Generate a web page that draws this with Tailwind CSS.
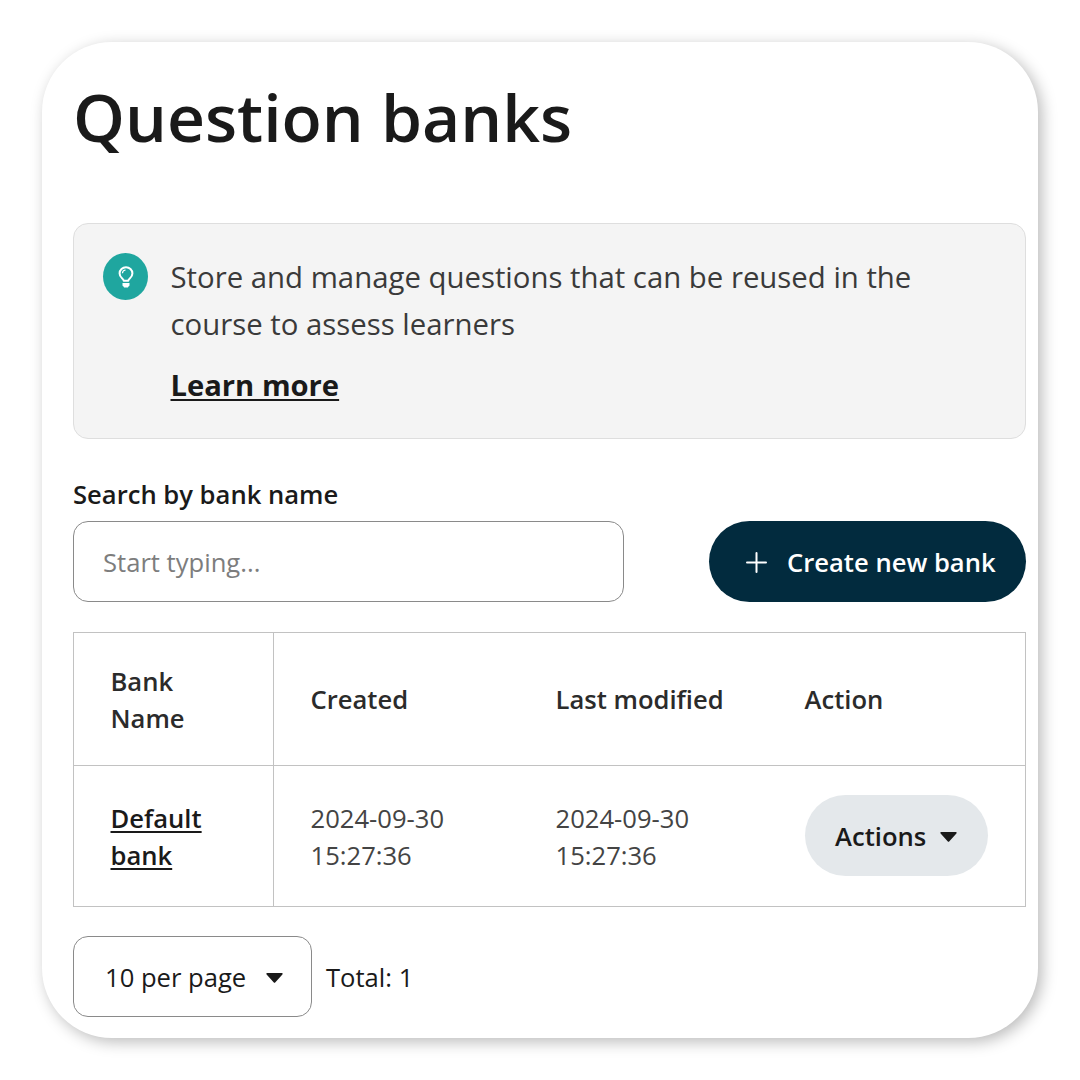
<!DOCTYPE html>
<html lang="en">
<head>
<meta charset="utf-8">
<title>Question banks</title>
<script src="https://cdn.jsdelivr.net/npm/@tailwindcss/browser@4"></script>
</head>
<body class="bg-white font-['Open_Sans',sans-serif] text-[25.6px] leading-[37px] text-[#1a1a1a]">
<div class="h-[1080px] w-[1080px] overflow-hidden p-[42px]">
  <main class="h-[996px] w-[996px] rounded-[70px] bg-white pl-[31px] pr-[12px] pt-[28px] shadow-[4px_4px_15px_rgba(0,0,0,0.27)]">
    <h1 class="h-[153px] text-[66px] font-semibold leading-[92px]">Question banks</h1>

    <section class="flex h-[216px] rounded-[15px] border border-[#dedede] bg-[#f4f4f4] pl-[29px] pt-[29px]">
      <span class="flex h-[47px] w-[45px] shrink-0 items-center justify-center rounded-[50%] bg-[#1fa69f]">
        <svg class="h-[22px] w-[16px]" viewBox="0 0 16 22" fill="none">
          <path d="M5.7 14.7C5.4 12.6 1.6 11.4 1.6 7.4a6.4 6.1 0 0 1 12.8 0c0 4-3.8 5.2-4.1 7.3z" stroke="#fff" stroke-width="2" stroke-linejoin="round"/>
          <path d="M4.4 7.2A3.5 3.5 0 0 1 7.6 4" stroke="#fff" stroke-width="1.2"/>
          <path d="M4.5 17h7v2.2a1.2 1.2 0 0 1-.8 1.1l-.8 1.2H6.1l-.8-1.2a1.2 1.2 0 0 1-.8-1.1z" fill="#fff"/>
        </svg>
      </span>
      <div class="ml-[22.5px] pt-px text-[29.35px] leading-[47px] text-[#3a3a3a]">
        <p class="w-[780px]">Store and manage questions that can be reused in the course to assess learners</p>
        <a class="mt-[14px] block w-fit text-[29.2px] font-bold text-[#1a1a1a] underline decoration-2 underline-offset-[3px]">Learn more</a>
      </div>
    </section>

    <div class="mt-[37px] flex items-end justify-between">
      <label class="block">
        <span class="block font-semibold">Search by bank name</span>
        <input class="mt-[8px] block h-[81px] w-[551px] rounded-[15px] border border-[#8a8a8a] px-[29px] pt-[2px] placeholder:text-[#7d7d7d]" placeholder="Start typing...">
      </label>
      <button class="flex h-[81px] w-[317px] items-center rounded-full bg-[#022b3e] pl-[37px] pt-[2px] font-semibold text-white">
        <svg class="h-[21px] w-[21px]" viewBox="0 0 21 21" stroke="#fff" stroke-width="2" stroke-linecap="round"><path d="M10.5 1v19M1 10.5h19"/></svg>
        <span class="ml-[20px]">Create new bank</span>
      </button>
    </div>

    <table class="mt-[30px] h-[275px] w-[953px] table-fixed border-collapse border border-[#c2c2c2] text-left">
      <colgroup><col class="w-[200px]"><col class="w-[245px]"><col class="w-[249px]"><col></colgroup>
      <tr class="h-[133px] text-[#2b2b2b]">
        <th class="border-r border-[#c2c2c2] pl-[36.5px] pr-[40px] pt-[2px] font-semibold">Bank Name</th>
        <th class="pl-[36.5px] font-semibold">Created</th>
        <th class="pl-[37px] font-semibold">Last modified</th>
        <th class="pl-[37px] font-semibold">Action</th>
      </tr>
      <tr class="h-[141px] border-t border-[#c2c2c2] text-[#444]">
        <td class="border-r border-[#c2c2c2] pl-[36.5px] pr-[40px] pt-[2px]"><a class="font-semibold text-[#1a1a1a] underline decoration-2 underline-offset-[3px]">Default bank</a></td>
        <td class="pl-[36.5px] pr-[50px] pt-[2px]">2024-09-30 15:27:36</td>
        <td class="pl-[37px] pr-[50px] pt-[2px]">2024-09-30 15:27:36</td>
        <td class="pb-[2px] pl-[37px]">
          <button class="flex h-[81px] w-[183px] items-center rounded-full bg-[#e4e8eb] pl-[30.5px] pt-[2px] font-semibold text-[#1a1a1a]">Actions
            <svg class="ml-[14px] mt-px h-[10px] w-[17px]" viewBox="0 0 17 10" fill="#1a1a1a"><path d="M1.2 0h14.6c.9 0 1.2.9.6 1.5L9.4 9.3a1.2 1.2 0 0 1-1.8 0L.6 1.5C0 .9.3 0 1.2 0z"/></svg>
          </button>
        </td>
      </tr>
    </table>

    <div class="mt-[29px] flex items-center gap-[15px]">
      <button class="flex h-[81px] w-[239px] items-center rounded-[15px] border border-[#8a8a8a] pl-[31px] pt-[2px]">10 per page
        <svg class="ml-[20px] h-[10px] w-[17px]" viewBox="0 0 17 10" fill="#1a1a1a"><path d="M1.2 0h14.6c.9 0 1.2.9.6 1.5L9.4 9.3a1.2 1.2 0 0 1-1.8 0L.6 1.5C0 .9.3 0 1.2 0z"/></svg>
      </button>
      <span class="-ml-px pt-[2px]">Total: 1</span>
    </div>
  </main>
</div>
</body>
</html>
